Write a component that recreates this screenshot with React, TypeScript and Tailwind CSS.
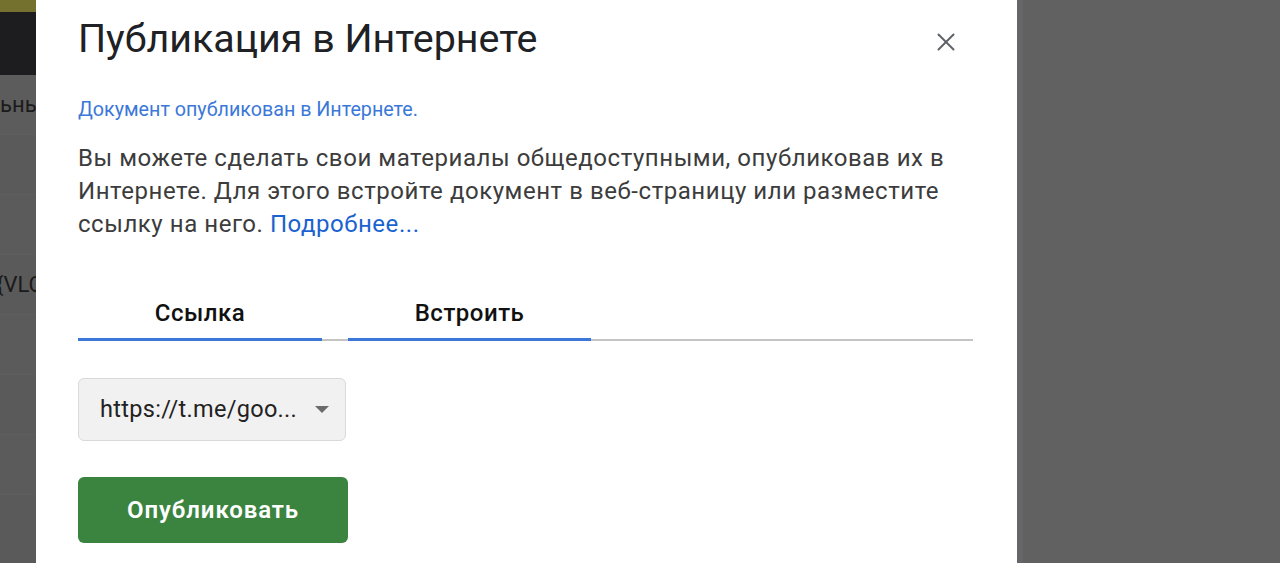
import { X } from "lucide-react";

const font = { fontFamily: "Roboto, 'Noto Sans', Arial, sans-serif" };

const LeftBackdrop = () => (
  <div className="w-[36px] shrink-0 flex flex-col overflow-hidden bg-[#5a5a5a]">
    <div className="h-[12px] bg-[#74712f]" />
    <div className="h-[63px] bg-[#1d1d1f]" />
    <div className="h-[60px] border-b border-[#5e5e5e] bg-[#5c5c5c] flex items-center text-[22px] text-[#1a1a1a] leading-none whitespace-nowrap">
      ьны
    </div>
    <div className="h-[60px] border-b border-[#5e5e5e] bg-[#5a5a5a]" />
    <div className="h-[60px] border-b border-[#5e5e5e] bg-[#5b5b5b]" />
    <div className="h-[60px] border-b border-[#5e5e5e] bg-[#5a5a5a] flex items-center -ml-[4px] text-[22px] text-[#1a1a1a] leading-none whitespace-nowrap">
      {"{VLC"}
    </div>
    <div className="h-[60px] border-b border-[#5e5e5e] bg-[#5b5b5b]" />
    <div className="h-[60px] border-b border-[#5e5e5e] bg-[#5a5a5a]" />
    <div className="h-[60px] border-b border-[#5e5e5e] bg-[#5b5b5b]" />
    <div className="flex-1 bg-[#5a5a5a]" />
  </div>
);

export default function App() {
  return (
    <div className="w-[1280px] h-[563px] flex overflow-hidden" style={font}>
      <LeftBackdrop />
      <div className="w-[981px] shrink-0 bg-white pl-[42px] pr-[44px] flex flex-col">
        <div className="flex items-start justify-between pt-[14px]">
          <h1 className="text-[39.4px] leading-[50px] text-[#202124]">
            Публикация в Интернете
          </h1>
          <button className="mt-[13px] mr-[12px] text-[#5f6368]">
            <X size={30} strokeWidth={1.6} />
          </button>
        </div>
        <p className="mt-[34px] text-[19.7px] leading-[24px] text-[#3b78d8]">
          Документ опубликован в Интернете.
        </p>
        <p className="mt-[20px] text-[24px] leading-[33px] tracking-[0.55px] text-[#3c3c3c]">
          Вы можете сделать свои материалы общедоступными, опубликовав их в
          Интернете. Для этого встройте документ в веб-страницу или разместите
          ссылку на него. <span className="text-[#1a62d0]">Подробнее...</span>
        </p>
        <div className="mt-[54px] flex border-b-2 border-[#c4c4c4]">
          <div className="w-[244px] h-[46px] flex items-start justify-center border-b-[3px] border-[#3b78d8] -mb-[2px] text-[24px] tracking-[0.5px] font-medium text-[#111]">
            Ссылка
          </div>
          <div className="w-[26px]" />
          <div className="w-[243px] h-[46px] flex items-start justify-center border-b-[3px] border-[#3b78d8] -mb-[2px] text-[24px] tracking-[0.5px] font-medium text-[#111]">
            Встроить
          </div>
        </div>
        <div className="mt-[37px] w-[268px] h-[63px] rounded-[6px] border border-[#d9d9d9] bg-[#f1f1f1] flex items-center pl-[21px] pr-[16px]">
          <span className="flex-1 text-[23.5px] tracking-[0.3px] text-[#222]">https://t.me/goo...</span>
          <svg width="14" height="8" viewBox="0 0 14 8">
            <path d="M0 0 L14 0 L7 7 Z" fill="#6b6b6b" />
          </svg>
        </div>
        <button className="mt-[36px] w-[270px] h-[66px] rounded-[6px] bg-[#3a843f] text-white text-[24px] tracking-[0.9px] font-semibold">
          Опубликовать
        </button>
      </div>
      <div className="flex-1 bg-[#616161] border-l-[6px] border-[#666569]" />
    </div>
  );
}
